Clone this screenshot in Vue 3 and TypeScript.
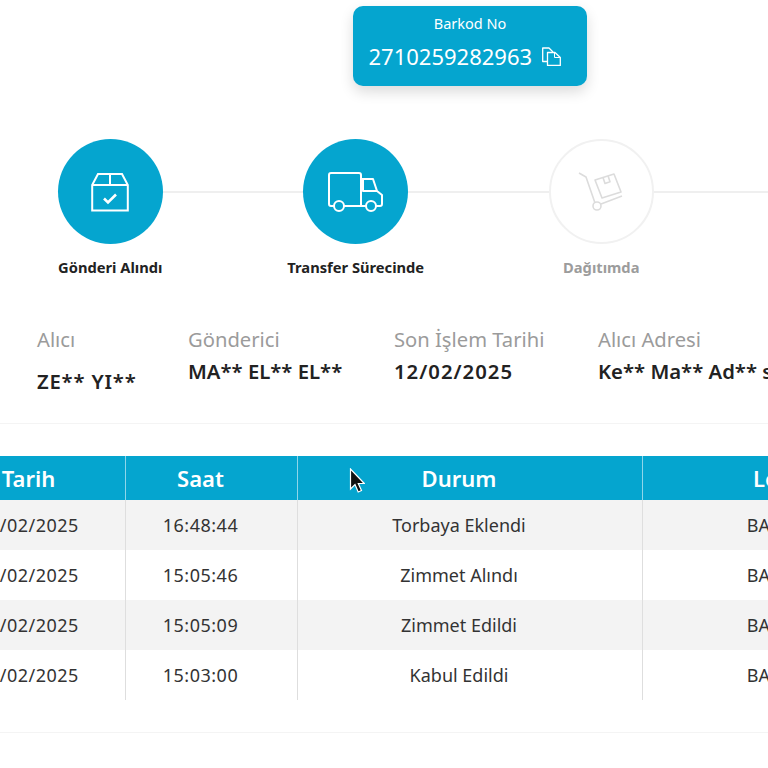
<template>
  <div class="page">
    <div class="barcode">
      <div class="barcode-label">Barkod No</div>
      <div class="barcode-value">
        <span>2710259282963</span>
        <svg class="copy" viewBox="0 0 19 19" width="19" height="19" fill="none" stroke="#fff" stroke-width="1.3" stroke-linejoin="round">
          <path d="M5.500 14.500H.7V1h6.300l4 4" />
          <path d="M5.500 5.500h7.500l5.300 5v8H5.500z" />
          <path d="M12.500 5.500v5h5.800" stroke-width="1" />
        </svg>
      </div>
    </div>

    <div class="steps">
      <div v-for="s in steps" :key="s.label" class="step" :class="{ off: !s.active }">
        <div class="circle">
          <svg v-if="s.icon === 'box'" viewBox="0 0 38 40" width="38" height="40" fill="none" stroke="#fff" stroke-width="2">
            <path d="M1.200 13 7 2h24l5.800 11v25.500H1.200z" />
            <path d="M1.200 13h35.600M19 2v11" />
            <path d="M13 26.500l4 4 8-8" stroke-width="2.600" />
          </svg>
          <svg v-else-if="s.icon === 'truck'" viewBox="0 0 56 40" width="56" height="40" fill="none" stroke="#fff" stroke-width="2" stroke-linejoin="round">
            <path d="M6 34H3a2 2 0 0 1-2-2V3a2 2 0 0 1 2-2h28a2 2 0 0 1 2 2v31H16" />
            <path d="M33 7h12l4 12 5 4v9a2 2 0 0 1-2 2h-4M38 34h-5" />
            <path d="M35 7v12h14" />
            <circle cx="11" cy="34" r="5" />
            <circle cx="43" cy="34" r="5" />
          </svg>
          <svg v-else viewBox="0 0 46 40" width="46" height="40" fill="none" stroke="#dcdcdc" stroke-width="1.600" stroke-linejoin="round">
            <path d="M1 1l7 4 9 26" />
            <circle cx="19" cy="34" r="4" />
            <path d="M23 32l21-8" />
            <path d="M17 8l19-6 7 18-19 6z" />
            <path d="M25 5.500l2 6 5-1.700-2-6" />
          </svg>
        </div>
        <div class="step-label">{{ s.label }}</div>
      </div>
    </div>

    <div class="info">
      <div v-for="i in info" :key="i.label" class="info-col" :style="{ width: i.width + 'px' }">
        <div class="info-label">{{ i.label }}</div>
        <div class="info-value" :class="{ low: i.low, digits: i.digits }">{{ i.value }}</div>
      </div>
    </div>

    <div class="rule"></div>

    <div class="table">
      <div class="cell head">Tarih</div>
      <div class="cell head">Saat</div>
      <div class="cell head">Durum</div>
      <div class="cell head">Lokasyon</div>
      <template v-for="(r, n) in rows" :key="n">
        <div class="cell num" :class="{ alt: n % 2 === 0 }">{{ r.date }}</div>
        <div class="cell num" :class="{ alt: n % 2 === 0 }">{{ r.time }}</div>
        <div class="cell" :class="{ alt: n % 2 === 0 }">{{ r.status }}</div>
        <div class="cell loc" :class="{ alt: n % 2 === 0 }">BAŞAKŞEHİR</div>
      </template>
    </div>

    <div class="rule bottom"></div>

    <svg class="cursor" viewBox="0 0 16 26" width="16" height="26">
      <path d="M1.500 1v20l4.500-4.500 3.200 7.500 3.300-1.500-3.200-7h6z" fill="#111" stroke="#fff" stroke-width="1.200" />
    </svg>
  </div>
</template>

<script setup lang="ts">
const steps = [
  { label: 'Gönderi Alındı', icon: 'box', active: true },
  { label: 'Transfer Sürecinde', icon: 'truck', active: true },
  { label: 'Dağıtımda', icon: 'cart', active: false },
  { label: 'Teslim Edildi', icon: 'cart', active: false },
]

const info = [
  { label: 'Alıcı', value: 'ZE** YI**', width: 151, low: true, digits: false },
  { label: 'Gönderici', value: 'MA** EL** EL**', width: 206, low: false, digits: false },
  { label: 'Son İşlem Tarihi', value: '12/02/2025', width: 204, low: false, digits: true },
  { label: 'Alıcı Adresi', value: 'Ke** Ma** Ad** so**', width: 300, low: false, digits: false },
]

const rows = [
  { date: '12/02/2025', time: '16:48:44', status: 'Torbaya Eklendi' },
  { date: '12/02/2025', time: '15:05:46', status: 'Zimmet Alındı' },
  { date: '12/02/2025', time: '15:05:09', status: 'Zimmet Edildi' },
  { date: '12/02/2025', time: '15:03:00', status: 'Kabul Edildi' },
]
</script>

<style>
html, body { margin: 0; background: #fff; }
</style>

<style scoped>
.page {
  position: relative;
  width: 768px;
  height: 768px;
  overflow: hidden;
  background: #fff;
  padding-top: 6px;
  box-sizing: border-box;
  font-family: "Noto Sans", "Liberation Sans", sans-serif;
  color: #222;
}
.barcode {
  width: 234px;
  height: 80px;
  margin-left: 353px;
  box-sizing: border-box;
  padding-top: 7px;
  background: #05a5cf;
  border-radius: 10px;
  box-shadow: 0 6px 14px rgba(0, 0, 0, 0.14);
  color: #fff;
  text-align: center;
}
.barcode-label { font-size: 14.500px; line-height: 20px; }
.barcode-value {
  display: flex;
  align-items: center;
  gap: 10px;
  padding-left: 15.500px;
  margin-top: 8px;
  font-size: 22px;
  line-height: 30px;
}
.copy { flex: none; }
.steps {
  display: flex;
  width: 1000px;
  margin-top: 53px;
  margin-left: -12.500px;
}
.step {
  position: relative;
  flex: 0 0 245.500px;
  display: flex;
  flex-direction: column;
  align-items: center;
}
.step::after {
  content: "";
  position: absolute;
  top: 52px;
  left: 50%;
  width: 100%;
  height: 2px;
  background: #efefef;
}
.circle {
  position: relative;
  z-index: 1;
  width: 105px;
  height: 105px;
  border-radius: 50%;
  background: #05a5cf;
  display: flex;
  align-items: center;
  justify-content: center;
  box-sizing: border-box;
}
.off .circle { background: #fff; border: 2px solid #f1f1f1; }
.step-label {
  margin-top: 13px;
  font-size: 14.700px;
  line-height: 20px;
  font-weight: 700;
  white-space: nowrap;
}
.off .step-label { color: #9c9c9c; }
.info {
  display: flex;
  margin-top: 49px;
  padding-left: 37px;
  width: 1000px;
}
.info-col { flex: none; }
.info-label { font-size: 20.200px; line-height: 26px; color: #9b9b9b; white-space: nowrap; }
.info-value {
  margin-top: 6px;
  font-size: 20.300px;
  line-height: 26px;
  font-weight: 600;
  white-space: nowrap;
}
.info-value.low { margin-top: 16px; letter-spacing: 0.800px; }
.info-value.digits { letter-spacing: 1px; }
.rule { height: 1px; background: #f4f4f4; margin-top: 29px; }
.table {
  display: grid;
  grid-template-columns: 172px 172px 345px 345px;
  grid-template-rows: 44px;
  grid-auto-rows: 50px;
  width: 1034px;
  margin-top: 32px;
  margin-left: -46px;
}
.cell {
  display: flex;
  align-items: center;
  justify-content: center;
  padding-right: 22px;
  box-sizing: border-box;
  font-size: 18px;
  color: #333;
  border-right: 1px solid #dedede;
  white-space: nowrap;
}
.cell.num { letter-spacing: 0.500px; }
.cell.loc { padding-right: 30px; }
.cell.alt { background: #f3f3f3; }
.cell.head {
  background: #05a5cf;
  color: #fff;
  font-size: 22px;
  font-weight: 600;
  border-right-color: #8fd6ea;
}
.rule.bottom { margin-top: 32px; }
.cursor { position: absolute; left: 349px; top: 468px; }
</style>
